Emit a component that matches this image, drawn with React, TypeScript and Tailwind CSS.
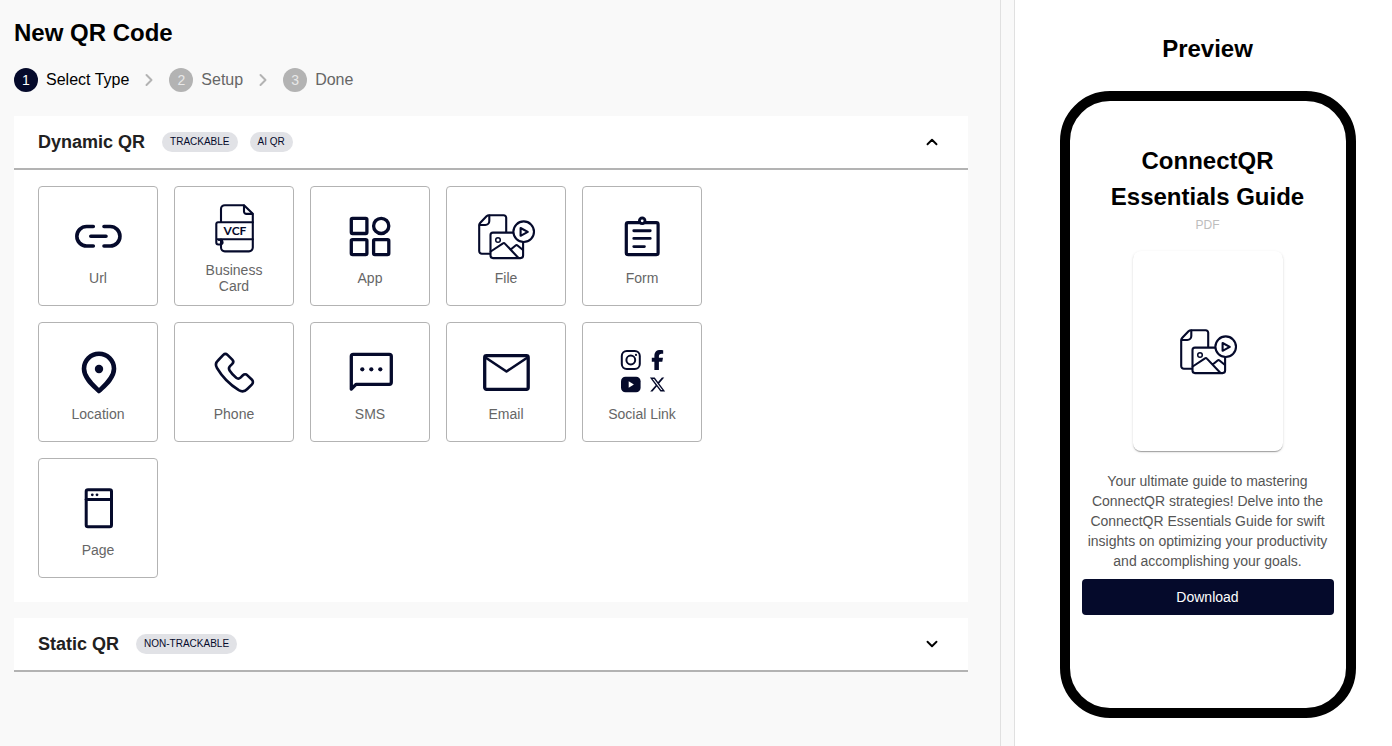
import { useState } from "react"
import type { ReactNode } from "react"
import { ChevronDown, ChevronRight, ChevronUp } from "lucide-react"
import { FaFacebookF, FaXTwitter } from "react-icons/fa6"

function Icon({ width, children }: { width: number; children: ReactNode }) {
  return (
    <svg
      viewBox="0 0 60 60"
      className="size-[60px] shrink-0 text-[#050a2b]"
      fill="none"
      stroke="currentColor"
      strokeWidth={width}
      strokeLinecap="round"
      strokeLinejoin="round"
      aria-hidden="true"
    >
      {children}
    </svg>
  )
}

function UrlIcon() {
  return (
    <Icon width={3.6}>
      <path d="M25.3 20.5H18.6a9.75 9.75 0 0 0 0 19.5h6.7M36 20.5h6.2a9.75 9.75 0 0 1 0 19.5H36M22.8 30.3H38" />
    </Icon>
  )
}

function BusinessCardIcon() {
  return (
    <Icon width={2.1}>
      <path d="M17 24V11a3.8 3.8 0 0 1 3.8-3.8H40l8.8 8.6v33.8a3.8 3.8 0 0 1-3.8 3.8H20.8a3.8 3.8 0 0 1-3.8-3.8v-8" />
      <path d="M40 7.5v6a2.4 2.4 0 0 0 2.4 2.4h6" />
      <path d="M48.8 24.3H14a1.7 1.7 0 0 0-1.7 1.7v18.5a2 2 0 0 0 2 2H17M12.3 41.3h36.5M17 46.500a2 2 0 0 0-2-4.500" />
      <text
        x="31"
        y="37"
        textAnchor="middle"
        fill="currentColor"
        stroke="none"
        className="font-['Lato',sans-serif] text-[12px] font-bold"
      >
        VCF
      </text>
    </Icon>
  )
}

function AppIcon() {
  return (
    <Icon width={3.3}>
      <rect x="11.3" y="12.3" width="15.6" height="15.2" rx="1.2" />
      <circle cx="41.2" cy="19.9" r="7.6" />
      <rect x="11.3" y="33.6" width="15.6" height="15" rx="1.2" />
      <rect x="33.6" y="33.6" width="15.2" height="15" rx="1.2" />
    </Icon>
  )
}

function FileIcon() {
  return (
    <Icon width={2.1}>
      <path d="M30.2 26V11.7a2.5 2.5 0 0 0-2.5-2.5H13.2a4 4 0 0 0-2.7 1.1l-6.2 6.5a4 4 0 0 0-1.1 2.7V45a2.7 2.7 0 0 0 2.7 2.7H14" />
      <path d="M13.3 9.5V15a4 4 0 0 1-4 4H3.6" />
      <path d="M37 26.6H17a2.5 2.5 0 0 0-2.5 2.5v20.5a2.5 2.5 0 0 0 2.5 2.5h27.6a2.5 2.5 0 0 0 2.5-2.5V36.5" />
      <circle cx="47.7" cy="25.7" r="10.3" />
      <path d="M44.6 22v7.800l7.200-3.900z" />
      <circle cx="22" cy="34" r="2.300" strokeWidth="1.5" />
      <path d="M14.7 45.5 27 37.3a1.500 1.500 0 0 1 1.900.3L42.500 52M35 43.300l4.600-3.800a1.500 1.500 0 0 1 1.900 0L47 44" />
    </Icon>
  )
}

function FormIcon() {
  return (
    <Icon width={3.2}>
      <rect x="14.3" y="16.6" width="31.8" height="32.1" rx="1.8" />
      <path d="M21.8 24.700h16.400M21.800 32.400h16.400M21.800 40.600h10.600" strokeWidth="2.9" />
      <circle cx="30.2" cy="14.8" r="2.8" strokeWidth="2.8" fill="white" />
    </Icon>
  )
}

function LocationIcon() {
  return (
    <Icon width={4.6}>
      <path d="M31 49c-4.2-4.3-15-12.500-15-22.200a15 15 0 0 1 30 0C46 36.500 35.200 44.700 31 49z" />
      <circle cx="31" cy="27" r="4.2" fill="currentColor" stroke="none" />
    </Icon>
  )
}

function PhoneIcon() {
  return (
    <Icon width={2.6}>
      <path d="M19.300 12.900a3 3 0 0 1 4.200 0l4.800 4.800a3 3 0 0 1 0 4.200L26 24.200a3.500 3.500 0 0 0-.4 4.300c1.800 2.800 3.800 5 6.600 7.300a3.300 3.300 0 0 0 4.300-.2l2.400-2.300a3.200 3.200 0 0 1 4.500 0l4.600 4.500a3.200 3.200 0 0 1 0 4.500L43.300 47a7 7 0 0 1-8.500 1.200C26.500 43 18 34.500 13 26a6 6 0 0 1 1-7.500z" />
    </Icon>
  )
}

function SmsIcon() {
  return (
    <Icon width={3.3}>
      <path d="M11.300 47V14.300a2 2 0 0 1 2-2h36a2 2 0 0 1 2 2v26a2 2 0 0 1-2 2H16z" />
      <g fill="currentColor" stroke="none">
        <circle cx="22.3" cy="27.3" r="2.1" />
        <circle cx="31.3" cy="27.3" r="2.1" />
        <circle cx="40.3" cy="27.3" r="2.1" />
      </g>
    </Icon>
  )
}

function EmailIcon() {
  return (
    <Icon width={3.3}>
      <rect x="8.7" y="13.7" width="43.5" height="33.6" rx="1.8" />
      <path d="m9.500 15.500 21 14 21-14" strokeWidth="2.7" />
    </Icon>
  )
}

function SocialIcon() {
  return (
    <Icon width={2}>
      <rect x="9.8" y="9" width="18" height="18" rx="5" />
      <circle cx="18.8" cy="18" r="4.4" />
      <circle cx="24" cy="12.9" r="1.1" fill="currentColor" stroke="none" />
      <FaFacebookF x="35.5" y="8" size={20} stroke="none" />
      <rect x="9" y="34.7" width="19.6" height="15.6" rx="4.5" fill="currentColor" stroke="none" />
      <path d="M16.700 39.300v6.400l5.200-3.200z" fill="white" stroke="none" />
      <FaXTwitter x="37" y="34" size={17} stroke="none" />
    </Icon>
  )
}

function PageIcon() {
  return (
    <Icon width={3}>
      <rect x="18.2" y="11.8" width="25.3" height="37" rx="1.8" />
      <path d="M18.200 21.400h25.300" />
      <g fill="currentColor" stroke="none">
        <circle cx="24.3" cy="16.8" r="1.4" />
        <circle cx="29" cy="16.8" r="1.4" />
      </g>
    </Icon>
  )
}

const types = [
  { label: "Url", icon: UrlIcon },
  { label: "Business Card", icon: BusinessCardIcon },
  { label: "App", icon: AppIcon },
  { label: "File", icon: FileIcon },
  { label: "Form", icon: FormIcon },
  { label: "Location", icon: LocationIcon },
  { label: "Phone", icon: PhoneIcon },
  { label: "SMS", icon: SmsIcon },
  { label: "Email", icon: EmailIcon },
  { label: "Social Link", icon: SocialIcon },
  { label: "Page", icon: PageIcon },
]

const steps = ["Select Type", "Setup", "Done"]

function Stepper({ active }: { active: number }) {
  return (
    <ol className="flex items-center">
      {steps.map((step, i) => (
        <li key={step} className="flex items-center">
          {i > 0 && <ChevronRight size={20} strokeWidth={2.4} className="mx-2.5 text-[#b3b3b3]" />}
          <span
            className={
              i === active
                ? "flex size-6 items-center justify-center rounded-full bg-[#050a2b] text-sm text-white"
                : "flex size-6 items-center justify-center rounded-full bg-[#b3b3b3] text-sm text-[#e8e8e8]"
            }
          >
            {i + 1}
          </span>
          <span className={i === active ? "ml-2 text-black" : "ml-2 text-[#666666]"}>{step}</span>
        </li>
      ))}
    </ol>
  )
}

function Section({
  title,
  tags,
  defaultOpen = false,
  children,
}: {
  title: string
  tags: string[]
  defaultOpen?: boolean
  children?: ReactNode
}) {
  const [open, setOpen] = useState(defaultOpen)
  const Chevron = open ? ChevronUp : ChevronDown

  return (
    <section className="bg-white">
      <h2>
        <button
          type="button"
          aria-expanded={open}
          onClick={() => setOpen(!open)}
          className="flex w-full items-center border-b-2 border-[#b3b3b3] px-6 py-3 text-left"
        >
          <span className="mr-[5px] text-lg leading-7 font-bold text-[#212121]">{title}</span>
          {tags.map((tag) => (
            <span
              key={tag}
              className="mr-3 ml-0 h-5 rounded-full bg-[#e1e2e6] px-2 text-[10px] leading-5 text-[#050a2b] first-of-type:ml-0 nth-2:ml-3"
            >
              {tag}
            </span>
          ))}
          <span className="ml-auto flex size-6 items-center justify-center text-black">
            <Chevron size={18} strokeWidth={2.5} />
          </span>
        </button>
      </h2>
      {open && children}
    </section>
  )
}

function PhonePreview() {
  return (
    <div className="flex min-h-[627px] w-[296px] flex-col items-center rounded-[50px] border-10 border-black bg-white px-3 pt-[42px] text-center">
      <h3 className="text-2xl leading-9 font-bold">ConnectQR Essentials Guide</h3>
      <p className="text-xs leading-5 text-[#bdbdbd]">PDF</p>
      <div className="mt-4 flex h-[200px] w-[150px] items-center justify-center rounded-lg bg-white shadow-[0_2px_1px_-1px_rgba(0,0,0,0.2),0_1px_1px_rgba(0,0,0,0.14),0_1px_3px_rgba(0,0,0,0.12)]">
        <FileIcon />
      </div>
      <p className="mt-5 text-sm leading-5 text-[#555555]">
        Your ultimate guide to mastering ConnectQR strategies! Delve into the ConnectQR Essentials
        Guide for swift insights on optimizing your productivity and accomplishing your goals.
      </p>
      <button type="button" className="mt-2 h-9 w-full rounded-sm bg-[#050a2b] text-sm text-white">
        Download
      </button>
    </div>
  )
}

export default function App() {
  return (
    <div className="flex min-h-screen gap-[13px] bg-[#f9f9f9] font-['Liberation_Sans',Arial,sans-serif] text-black">
      <main className="min-w-0 flex-1 border-r border-[#e0e0e0] pt-[15px] pr-8 pb-6 pl-[14px]">
        <h1 className="mb-[17px] text-2xl leading-9 font-bold">New QR Code</h1>
        <Stepper active={0} />

        <div className="mt-6 flex flex-col gap-4">
          <Section title="Dynamic QR" tags={["TRACKABLE", "AI QR"]} defaultOpen>
            <div className="grid grid-cols-[repeat(5,120px)] gap-4 px-6 pt-4 pb-6">
              {types.map(({ label, icon: TypeIcon }) => (
                <button
                  key={label}
                  type="button"
                  className="flex h-[120px] flex-col items-center justify-center gap-1 rounded-sm border border-[#b3b3b3] bg-white px-5 text-sm leading-4 text-[#666666]"
                >
                  <TypeIcon />
                  {label}
                </button>
              ))}
            </div>
          </Section>
          <Section title="Static QR" tags={["NON-TRACKABLE"]} />
        </div>
      </main>

      <aside className="flex w-[378px] shrink-0 flex-col items-center border-l border-[#e0e0e0] bg-white pt-[31px] pb-7 pl-2">
        <h2 className="mb-6 text-2xl leading-9 font-bold">Preview</h2>
        <PhonePreview />
      </aside>
    </div>
  )
}
